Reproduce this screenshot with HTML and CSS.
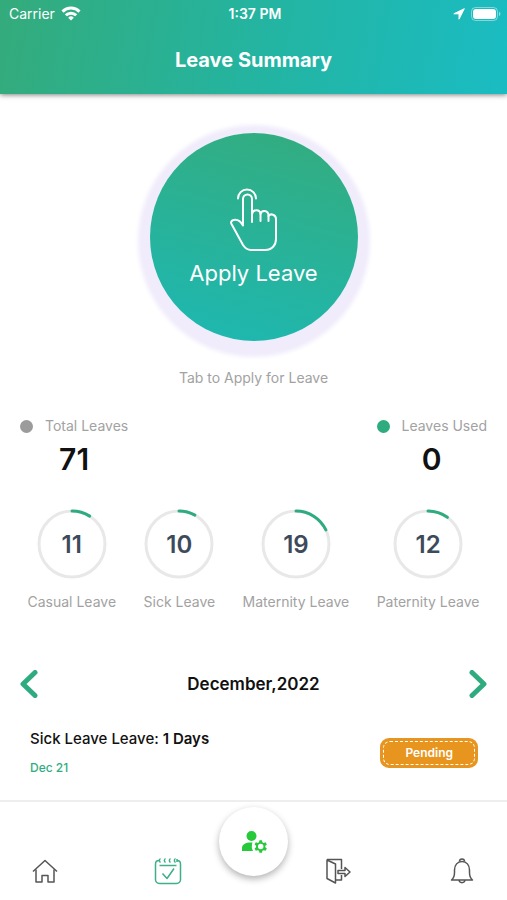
FILE: index.html
```
<!DOCTYPE html>
<html lang="en">
<head>
    <meta charset="UTF-8">
    <meta name="viewport" content="width=device-width, initial-scale=1.0">
    <title>Leave Summary</title>
    <link rel="stylesheet" href="styles.css">
</head>
<body>

    <header class="header">
        <div class="status-bar">
            <div class="carrier">
                <span>Carrier</span>
                <svg width="20" height="15" viewBox="0 0 20 15" fill="none" stroke="#fff" stroke-width="3">
                    <path d="M1.500 5.600a12 12 0 0 1 17 0"/>
                    <path d="M4.800 9.300a7.400 7.400 0 0 1 10.400 0"/>
                    <path d="M10 14.500l-2.800-2.800a4 4 0 0 1 5.600 0z" fill="#fff" stroke="none"/>
                </svg>
            </div>
            <span class="time">1:37 PM</span>
            <div class="battery">
                <svg width="12" height="12" viewBox="0 0 12 12" fill="#fff" stroke="#fff" stroke-linejoin="round">
                    <path d="M11.300 0.700L0.800 5.800h5.200v5.400z"/>
                </svg>
                <svg width="30" height="14" viewBox="0 0 30 14">
                    <rect x="0.5" y="0.5" width="26" height="13" rx="4" fill="none" stroke="#fff" stroke-opacity="0.45"/>
                    <rect x="2" y="2" width="23" height="10" rx="3" fill="#fff"/>
                    <path d="M28 4.800v4.400a2.400 2.400 0 0 0 0-4.400z" fill="#fff" fill-opacity="0.5"/>
                </svg>
            </div>
        </div>
        <h1 class="title">Leave Summary</h1>
    </header>

    <main class="main">
        <section class="apply">
            <button class="apply-btn" type="button">
                <svg width="48" height="64" viewBox="0 0 48 64" fill="none" stroke="#fff" stroke-width="2" stroke-linecap="round" stroke-linejoin="round">
                    <path d="M8 10.500a9 9 0 0 1 18 0"/>
                    <path d="M13 36V11a4.500 4.500 0 0 1 9 0v23"/>
                    <path d="M22 26c1-5 8-5 8.500 0v7"/>
                    <path d="M30.500 26c1-4.500 7.500-4 8 1v6"/>
                    <path d="M38.500 28c2-3 7.500-1.500 7.500 3v20c0 6-4 11-11 11H21c-4 0-6-2-8-5L1.500 36c-1-2 0-3.500 2-4 4-1 7 1 9.500 5.500"/>
                </svg>
                <span>Apply Leave</span>
            </button>
            <p class="hint">Tab to Apply for Leave</p>
        </section>

        <section class="totals">
            <div class="total">
                <span class="total-label"><i class="dot"></i>Total Leaves</span>
                <strong class="total-value">71</strong>
            </div>
            <div class="total">
                <span class="total-label"><i class="dot dot-used"></i>Leaves Used</span>
                <strong class="total-value">0</strong>
            </div>
        </section>

        <section class="types">
            <div class="type">
                <div class="ring">
                    <svg viewBox="0 0 70 70">
                        <circle class="ring-track" cx="35" cy="35" r="33"/>
                        <circle class="ring-value" cx="35" cy="35" r="33" pathLength="100" stroke-dasharray="9 100"/>
                    </svg>
                    <span class="ring-number">11</span>
                </div>
                <span class="type-label">Casual Leave</span>
            </div>
            <div class="type">
                <div class="ring">
                    <svg viewBox="0 0 70 70">
                        <circle class="ring-track" cx="35" cy="35" r="33"/>
                        <circle class="ring-value" cx="35" cy="35" r="33" pathLength="100" stroke-dasharray="8 100"/>
                    </svg>
                    <span class="ring-number">10</span>
                </div>
                <span class="type-label">Sick Leave</span>
            </div>
            <div class="type">
                <div class="ring">
                    <svg viewBox="0 0 70 70">
                        <circle class="ring-track" cx="35" cy="35" r="33"/>
                        <circle class="ring-value" cx="35" cy="35" r="33" pathLength="100" stroke-dasharray="18 100"/>
                    </svg>
                    <span class="ring-number">19</span>
                </div>
                <span class="type-label">Maternity Leave</span>
            </div>
            <div class="type">
                <div class="ring">
                    <svg viewBox="0 0 70 70">
                        <circle class="ring-track" cx="35" cy="35" r="33"/>
                        <circle class="ring-value" cx="35" cy="35" r="33" pathLength="100" stroke-dasharray="10 100"/>
                    </svg>
                    <span class="ring-number">12</span>
                </div>
                <span class="type-label">Paternity Leave</span>
            </div>
        </section>

        <section class="month">
            <button class="month-btn" type="button" aria-label="Previous month">
                <svg width="18" height="28" viewBox="0 0 18 28"><path d="M15 2.500L3 14l12 11.500"/></svg>
            </button>
            <h2 class="month-name">December,2022</h2>
            <button class="month-btn" type="button" aria-label="Next month">
                <svg width="18" height="28" viewBox="0 0 18 28"><path d="M3 2.500L15 14L3 25.500"/></svg>
            </button>
        </section>

        <section class="request">
            <div>
                <p class="request-title">Sick Leave Leave: <b>1 Days</b></p>
                <p class="request-date">Dec 21</p>
            </div>
            <span class="badge"><span class="badge-text">Pending</span></span>
        </section>
    </main>

    <nav class="tabs">
        <div class="tab-group">
            <a href="#" class="tab" aria-label="Home">
                <svg width="26" height="26" viewBox="0 0 26 26">
                    <path d="M1 13.500L13 2.500l12 11"/>
                    <path d="M4 11.500V24h6v-6.500h6V24h6V11.500"/>
                </svg>
            </a>
            <a href="#" class="tab tab-active" aria-label="Leave">
                <svg width="28" height="28" viewBox="0 0 28 28">
                    <path d="M5 3.500C3 3.500 1.500 5 1.500 7v15.500c0 2 1.500 4 4 4h17c2.500 0 4-2 4-4V7c0-2-1.500-3.500-3.500-3.500"/>
                    <path d="M5.500 8.500h17"/>
                    <path d="M6.500 1.500c-1.500 1-1.500 3 0 4M11.500 1.500c-1.500 1-1.500 3 0 4M16.500 1.500c-1.500 1-1.500 3 0 4M21.500 1.500c-1.500 1-1.500 3 0 4M23 2v3"/>
                    <path d="M8.500 16.500l4.500 5 7-10"/>
                </svg>
            </a>
        </div>
        <a href="#" class="fab" aria-label="Manage users">
            <svg width="26" height="24" viewBox="0 0 26 24" fill="#25c93a">
                <circle cx="10.500" cy="6" r="5"/>
                <path d="M1 21v-3c0-4 4.500-6 10.500-5.500-1 3-1 6 0.500 8.500z"/>
                <path transform="translate(4.500 3.500) scale(0.800)" fill-rule="evenodd" d="M17.400 8.500h3.200l.5 2.400 1.600.9 2.400-.8 1.600 2.800-1.900 1.600v1.800l1.900 1.600-1.600 2.800-2.400-.8-1.600.9-.5 2.400h-3.200l-.5-2.400-1.600-.9-2.400.8-1.600-2.800 1.900-1.600v-1.800l-1.900-1.600 1.600-2.800 2.400.8 1.600-.9zM19 12.900a3.400 3.400 0 1 0 0 6.800 3.400 3.400 0 1 0 0-6.800z"/>
            </svg>
        </a>
        <div class="tab-group">
            <a href="#" class="tab" aria-label="Leave out">
                <svg width="26" height="26" viewBox="0 0 26 26">
                    <path d="M2 2l8.500 4v19L2 20.500z"/>
                    <path d="M2 1.500h14.500V11M16.500 17v5h-6"/>
                    <path d="M13 12.500h7V9.500l5 4.500-5 4.500v-3h-7z"/>
                </svg>
            </a>
            <a href="#" class="tab" aria-label="Notifications">
                <svg width="26" height="26" viewBox="0 0 26 26">
                    <path d="M2.500 22h21c-2.500-2-3-4-3-7.500V12c0-5-3-8.500-7.500-8.500S5.500 7 5.500 12v2.500c0 3.500-.5 5.500-3 7.500z"/>
                    <path d="M10.500 3.500c0-3.500 5-3.500 5 0M10 22c.5 3.500 5.500 3.500 6 0"/>
                </svg>
            </a>
        </div>
    </nav>

</body>
</html>
```
FILE: styles.css
```
* {
    box-sizing: border-box;
}

body {
    font-family: Inter, Roboto, sans-serif;
    margin: 0;
    min-height: 100vh;
    display: flex;
    flex-direction: column;
    background-color: #fff;
    color: #111;
}

h1, h2, p {
    margin: 0;
}

button {
    font-family: inherit;
    border: none;
    padding: 0;
    cursor: pointer;
}

svg {
    display: block;
}

/* header */
.header {
    height: 94px;
    color: #fff;
    background: linear-gradient(100deg, #34ab7b, #24b4a0 50%, #1abcc3);
    box-shadow: 0 1px 5px rgba(0, 0, 0, 0.5);
}

.status-bar {
    display: grid;
    grid-template-columns: 1fr auto 1fr;
    align-items: center;
    height: 27px;
    padding: 0 6px 0 9px;
    font-size: 14px;
}

.carrier {
    display: flex;
    align-items: center;
    gap: 6px;
}

.time {
    font-weight: 600;
}

.battery {
    display: flex;
    align-items: center;
    justify-content: flex-end;
    gap: 6px;
}

.title {
    font-size: 20px;
    line-height: 24px;
    padding-top: 21px;
    font-weight: 700;
    text-align: center;
}

/* content */
.main {
    flex: 1;
}

.apply {
    display: flex;
    flex-direction: column;
    align-items: center;
    padding-top: 39px;
}

.apply-btn {
    display: flex;
    flex-direction: column;
    align-items: center;
    gap: 7px;
    width: 208px;
    height: 208px;
    padding-top: 55px;
    border-radius: 50%;
    color: #fff;
    font-size: 22px;
    line-height: 28px;
    background: linear-gradient(195deg, #32ad82 10%, #1fb7ae 90%);
    box-shadow: 0 4px 4px 12px #f0ecfb;
}

.hint {
    margin-top: 27px;
    font-size: 14px;
    line-height: 20px;
    color: #a2a2a2;
}

.totals {
    display: flex;
    justify-content: space-between;
    padding: 28px 20px 0;
}

.total {
    display: flex;
    flex-direction: column;
    align-items: center;
}

.total-label {
    display: flex;
    align-items: center;
    gap: 12px;
    font-size: 14px;
    line-height: 20px;
    color: #a2a2a2;
}

.dot {
    width: 13px;
    height: 13px;
    border-radius: 50%;
    background-color: #9b9b9b;
}

.dot-used {
    background-color: #2fac7f;
}

.total-value {
    margin-top: 3px;
    font-size: 30px;
    line-height: 40px;
    font-weight: 600;
}

.types {
    display: flex;
    justify-content: space-evenly;
    padding-top: 30px;
}

.type {
    display: flex;
    flex-direction: column;
    align-items: center;
    gap: 13px;
}

.ring {
    display: grid;
    width: 70px;
    height: 70px;
}

.ring svg,
.ring-number {
    grid-area: 1 / 1;
}

.ring-number {
    place-self: center;
    font-size: 24px;
    font-weight: 600;
    color: #3d4a5c;
}

.ring-track,
.ring-value {
    fill: none;
    stroke: #e8e8e8;
    stroke-width: 3;
}

.ring-value {
    stroke: #2fac7f;
    stroke-linecap: round;
    transform: rotate(-90deg);
    transform-origin: center;
}

.type-label {
    font-size: 14px;
    line-height: 20px;
    color: #a2a2a2;
}

.month {
    display: flex;
    align-items: center;
    justify-content: space-between;
    padding: 58px 20px 0;
}

.month-btn {
    background: none;
}

.month-btn path {
    fill: none;
    stroke: #2fac7f;
    stroke-width: 5;
    stroke-linecap: round;
    stroke-linejoin: round;
}

.month-name {
    font-size: 17px;
    font-weight: 600;
}

.request {
    display: flex;
    align-items: center;
    justify-content: space-between;
    padding: 30px 29px 23px 30px;
}

.request-title {
    font-size: 15px;
    line-height: 22px;
    font-weight: 500;
}

.request-title b {
    font-weight: 600;
}

.request-date {
    margin-top: 9px;
    font-size: 12px;
    line-height: 18px;
    font-weight: 500;
    color: #2fac7f;
}

.badge {
    padding: 3px;
    border-radius: 9px;
    background-color: #e8951f;
}

.badge-text {
    display: block;
    padding: 3px 21px;
    border: 1px dashed #fff;
    border-radius: 7px;
    font-size: 12px;
    line-height: 16px;
    font-weight: 600;
    color: #fff;
}

/* bottom tabs */
.tabs {
    display: flex;
    gap: 37px;
    height: 100px;
    padding: 5px 32px 0;
    border-top: 2px solid #eee;
}

.tab-group {
    flex: 1;
    display: flex;
    align-items: center;
    justify-content: space-between;
    padding-top: 44px;
    height: 84px;
}

.tab svg {
    fill: none;
    stroke: #555;
    stroke-width: 1.5;
    stroke-linejoin: round;
}

.tab-active svg {
    stroke: #3fae8a;
}

.fab {
    display: flex;
    align-items: center;
    justify-content: center;
    width: 69px;
    height: 69px;
    border-radius: 50%;
    background-color: #fff;
    box-shadow: 0 3px 7px rgba(0, 0, 0, 0.3);
}
```
